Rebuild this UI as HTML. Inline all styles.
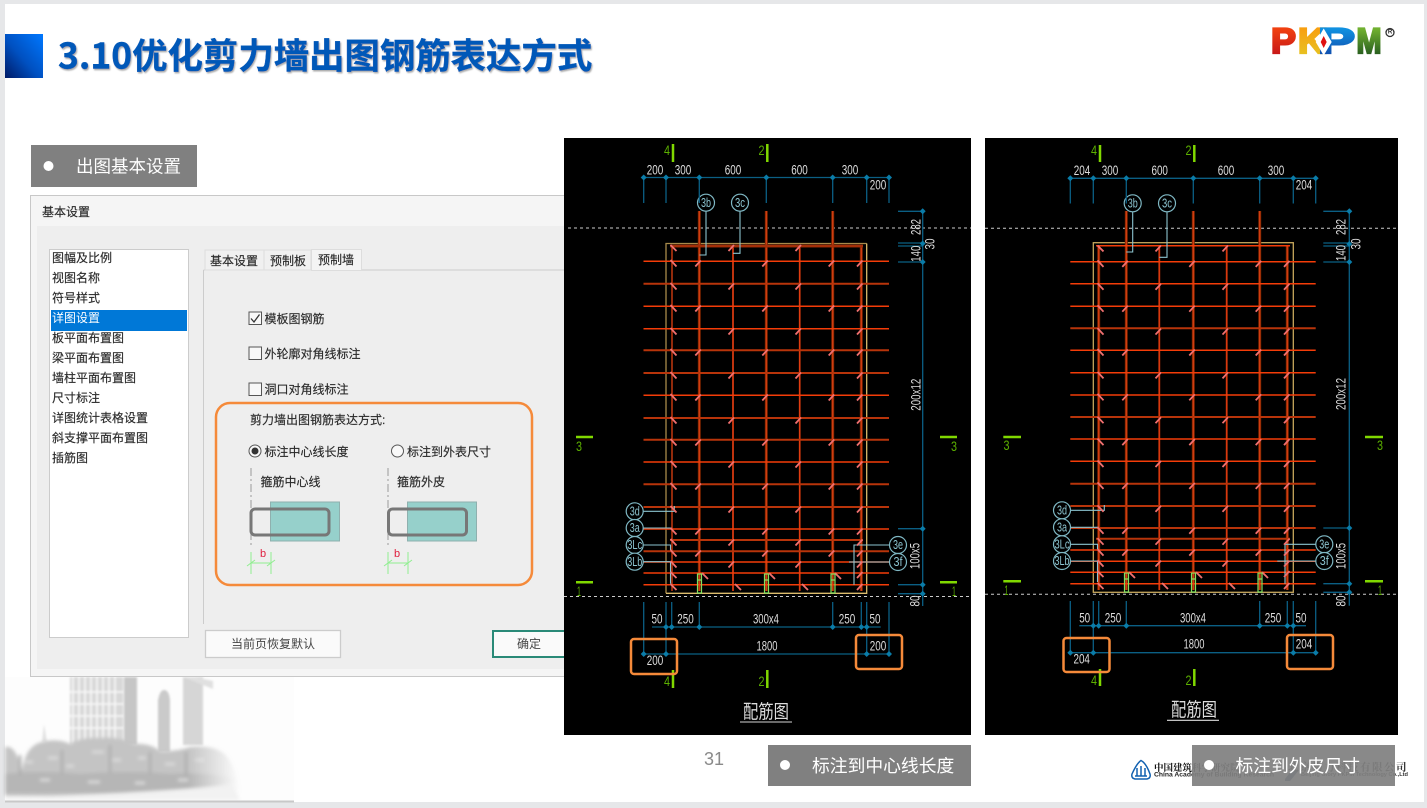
<!DOCTYPE html>
<html><head><meta charset="utf-8"><style>
html,body{margin:0;padding:0;background:#e6e7e9;overflow:hidden}
svg{display:block}
text{dominant-baseline:central;font-family:"Liberation Sans","Noto Sans CJK SC",sans-serif}
.t{font-size:12px;fill:#2a2a2a;stroke:#2a2a2a;stroke-width:.15px}
.c{font-size:13.5px;fill:#ddd;text-anchor:middle}
.o{font-size:12.5px;fill:#8cc4d0;text-anchor:middle}
.g{font-size:14px;fill:#5cb000;text-anchor:middle}
.w{font-size:17.8px;fill:#fff;font-family:"Noto Sans CJK SC",sans-serif}
.ti{font-family:"Noto Sans CJK SC",sans-serif;font-size:19px;fill:#ddd;text-anchor:middle}
.lg{font-size:35px;font-weight:700;font-family:"Liberation Sans",sans-serif}
</style></head><body>
<svg xmlns="http://www.w3.org/2000/svg" width="1427" height="808" viewBox="0 0 1427 808">
<defs>
<linearGradient id="sq" x1="0" y1="1" x2="1" y2="0"><stop offset="0" stop-color="#001a66"/><stop offset=".45" stop-color="#0050c0"/><stop offset="1" stop-color="#0078ff"/></linearGradient>
<linearGradient id="lp" gradientUnits="userSpaceOnUse" x1="0" y1="29" x2="0" y2="54"><stop offset="0" stop-color="#f04010"/><stop offset="1" stop-color="#c81818"/></linearGradient>
<linearGradient id="lk" gradientUnits="userSpaceOnUse" x1="0" y1="29" x2="0" y2="54"><stop offset="0" stop-color="#f8a010"/><stop offset="1" stop-color="#e8c020"/></linearGradient>
<linearGradient id="lb" gradientUnits="userSpaceOnUse" x1="0" y1="29" x2="0" y2="54"><stop offset="0" stop-color="#1090e0"/><stop offset="1" stop-color="#1050b0"/></linearGradient>
<linearGradient id="lm" gradientUnits="userSpaceOnUse" x1="0" y1="29" x2="0" y2="54"><stop offset="0" stop-color="#70b030"/><stop offset="1" stop-color="#2a6020"/></linearGradient>
<linearGradient id="fade" gradientUnits="userSpaceOnUse" x1="5" y1="0" x2="240" y2="0"><stop offset="0" stop-color="#fff"/><stop offset=".78" stop-color="#fff"/><stop offset="1" stop-color="#000"/></linearGradient>
<mask id="fm" maskUnits="userSpaceOnUse" x="0" y="670" width="300" height="138"><rect x="0" y="670" width="300" height="138" fill="url(#fade)"/></mask>
<filter id="bl" x="-5%" y="-5%" width="110%" height="110%"><feGaussianBlur stdDeviation="1"/></filter>
<filter id="bt" x="-5%" y="-10%" width="110%" height="120%"><feGaussianBlur stdDeviation="1.800"/></filter>
<filter id="ts" x="-5%" y="-20%" width="110%" height="140%"><feDropShadow dx="1" dy="1.5" stdDeviation=".8" flood-color="#888" flood-opacity=".7"/></filter>
<path id="d" d="M-3 0L0-3L3 0L0 3Z" fill="#0a7ca8"/>
<path id="A" d="M670.5-1l6 6.5M695.3 5.5l5.5-6M762.3 5.5l5.5-6M828.7 5.5l5.5-6M857 5.5l5.5-6" fill="none" stroke="#f07070" stroke-width="1.8"/>
<path id="B" d="M670.5-1l6 6.5M728.5 5.5l5.5-6M795.5 5.5l5.5-6M857 5.5l5.5-6" fill="none" stroke="#f07070" stroke-width="1.8"/>
<g id="ties">
<use href="#A" y="261"/><use href="#B" y="284"/><use href="#A" y="306"/><use href="#B" y="329"/><use href="#A" y="350"/><use href="#B" y="373"/><use href="#A" y="395"/><use href="#B" y="418"/><use href="#A" y="440"/><use href="#B" y="462"/><use href="#A" y="484"/><use href="#B" y="507"/><use href="#A" y="529"/><use href="#B" y="540"/><use href="#A" y="551"/><use href="#B" y="562"/>
<path d="M670.5 245l6 6M728.5 251l5.5-6M795.5 251l5.5-6M670.5 572l6 6M857 578l5.5-6M702 573l6 6M769 573l6 6M835 573l6 6M670.5 584l6 6M857 590l5.5-6M735 584l6 6M802 584l6 6" fill="none" stroke="#f07070" stroke-width="1.8"/>
<path d="M697.5 574h4v19h-4zM764.5 574h4v19h-4zM831 574h4v19h-4zM697.5 580h4M764.5 580h4M831 580h4" fill="none" stroke="#80e060" stroke-width="1.2"/>
</g>
</defs>

<rect x="5" y="4" width="1419" height="798" fill="#fff"/>

<!-- city image -->
<rect x="5" y="677" width="289" height="125" fill="#fdfdfd"/>
<g filter="url(#bl)">
<path d="M70 677h53v68H70z" fill="#d8d8d8"/>
<path d="M73 677v68M79 677v68M85 677v68M91 677v68M97 677v68M103 677v68M109 677v68M115 677v68M70 692h53M70 704h53M70 716h53M70 728h53" stroke="#fff" stroke-width="1.6" opacity=".85"/>
<path d="M124 677h13v68h-13z" fill="#c6c6c6"/>
<path d="M158 752V700Q160 690 164 690Q169 690 170 700V752z" fill="#cacaca"/>
<path d="M183 677h20v68h-20z" fill="#d6d6d6"/>
<path d="M183 677l30 12v-8l-18-4z" fill="#e0e0e0"/>
<path d="M42 742l2-18 3 18z" fill="#e2e2e2"/>
</g>
<g filter="url(#bt)"><g mask="url(#fm)">
<path d="M5 747Q13 745 18 758L22 770Q26 745 42 742Q58 738 70 744Q82 737 100 738Q118 736 135 744Q150 743 160 751Q175 752 190 747Q210 745 222 752Q236 762 240 796H5z" fill="#c4c4c4"/>
<path d="M5 774Q40 770 80 774Q130 770 170 774Q205 772 236 778V793H5z" fill="#b6b6b6"/>
<path d="M25 762h8M48 758h10M66 766h8M92 752h12M112 760h9M138 758h8M165 764h10M195 760h9M40 780h10M88 782h12M135 783h10M178 780h10" stroke="#d8d8d8" stroke-width="3" fill="none"/>
<path d="M20 755v20M62 750v24M110 745v28M150 752v22M186 752v24" stroke="#adadad" stroke-width="2.5" fill="none"/>
</g>
<path d="M5 797Q120 795 232 785L240 800H5z" fill="#f2f2f2"/>
</g>
<rect x="5" y="800.5" width="289" height="2" fill="#c8c8c8"/>

<!-- title -->
<rect x="5" y="34" width="38" height="44" fill="url(#sq)"/>
<text x="58" y="54" filter="url(#ts)" style="font-family:'Noto Sans CJK SC',sans-serif;font-size:35.4px;font-weight:700;fill:#0558b8;stroke:#0558b8;stroke-width:.4px">3.10优化剪力墙出图钢筋表达方式</text>

<!-- logo -->
<text class="lg" x="1271" y="41.5" textLength="25" lengthAdjust="spacingAndGlyphs" fill="url(#lp)" stroke="url(#lp)" stroke-width="2.2">P</text>
<text class="lg" x="1298" y="41.5" textLength="27" lengthAdjust="spacingAndGlyphs" fill="url(#lk)" stroke="url(#lk)" stroke-width="2.2">K</text>
<text class="lg" x="1318" y="41.5" textLength="37" lengthAdjust="spacingAndGlyphs" fill="url(#lb)" stroke="url(#lb)" stroke-width="2.2">P</text>
<text class="lg" x="1356.5" y="41.5" textLength="25" lengthAdjust="spacingAndGlyphs" fill="url(#lm)" stroke="url(#lm)" stroke-width="2.2">M</text>
<path d="M1323.7 28.5l-8 13.5 8 13.5 8-13.5z" fill="#fff"/>
<path d="M1323.7 36l-3 6 3 6 3-6z" fill="#e01010"/>
<circle cx="1390" cy="32.5" r="4" fill="none" stroke="#333" stroke-width="1.3"/>
<text x="1390" y="32.5" text-anchor="middle" font-size="6" font-weight="700" fill="#222">R</text>

<!-- label 1 -->
<rect x="31" y="145" width="166" height="42" fill="#808080"/>
<circle cx="48.5" cy="166" r="5" fill="#fff"/>
<text x="76" y="166" class="w" style="font-size:17.5px">出图基本设置</text>

<!-- dialog -->
<rect x="30.5" y="195.5" width="540" height="481" fill="#f5f5f5" stroke="#c8c8c8"/>
<rect x="37" y="226" width="530" height="443" fill="#eee"/>
<text x="42" y="212" class="t">基本设置</text>
<rect x="49.5" y="249.5" width="139" height="388" fill="#fff" stroke="#ccc"/>
<rect x="51" y="310" width="136" height="21" fill="#0078d7"/>
<text x="52" y="258" class="t">图幅及比例</text>
<text x="52" y="278" class="t">视图名称</text>
<text x="52" y="298" class="t">符号样式</text>
<text x="52" y="318" class="t" style="fill:#fff;stroke:none">详图设置</text>
<text x="52" y="338" class="t">板平面布置图</text>
<text x="52" y="358" class="t">梁平面布置图</text>
<text x="52" y="378" class="t">墙柱平面布置图</text>
<text x="52" y="398" class="t">尺寸标注</text>
<text x="52" y="418" class="t">详图统计表格设置</text>
<text x="52" y="438" class="t">斜支撑平面布置图</text>
<text x="52" y="458" class="t">插筋图</text>
<!-- tabs -->
<path d="M203.5 270H564M203.5 270V624" stroke="#ccc" fill="none"/>
<rect x="205" y="250" width="59" height="20" fill="#f0f0f0" stroke="#ddd"/>
<rect x="264" y="250" width="47" height="20" fill="#f0f0f0" stroke="#ddd"/>
<rect x="311.5" y="249.5" width="50" height="21" fill="#f4f4f4" stroke="#ddd"/>
<text x="210" y="261" class="t">基本设置</text>
<text x="270" y="261" class="t">预制板</text>
<text x="318" y="260" class="t">预制墙</text>
<!-- checks -->
<rect x="249" y="312" width="12.5" height="12.5" fill="#f8f8f8" stroke="#555"/>
<path d="M251 318.5l3 3.5 5.5-7.5" fill="none" stroke="#333" stroke-width="1.3"/>
<text x="264.5" y="319" class="t">模板图钢筋</text>
<rect x="249" y="347" width="12.5" height="12.5" fill="#f8f8f8" stroke="#555"/>
<text x="264.5" y="354" class="t">外轮廓对角线标注</text>
<rect x="249" y="383" width="12.5" height="12.5" fill="#f8f8f8" stroke="#555"/>
<text x="264.5" y="389.5" class="t">洞口对角线标注</text>
<rect x="216" y="403" width="316" height="182" rx="14" fill="none" stroke="#f58a3a" stroke-width="2.5"/>
<text x="250" y="420" class="t">剪力墙出图钢筋表达方式:</text>
<circle cx="255" cy="451" r="6" fill="#f8f8f8" stroke="#555"/><circle cx="255" cy="451" r="3.5" fill="#333"/>
<text x="264.5" y="452" class="t">标注中心线长度</text>
<circle cx="397.5" cy="451" r="6" fill="#f8f8f8" stroke="#555"/>
<text x="407" y="452" class="t">标注到外表尺寸</text>
<text x="260.5" y="482" class="t">箍筋中心线</text>
<text x="397" y="482" class="t">箍筋外皮</text>
<path d="M251 468V548M388 468V548" stroke="#999" stroke-dasharray="8 3 2 3" fill="none"/>
<rect x="270.5" y="502" width="69" height="39" fill="#96d0cb" stroke="#8fb0ae"/>
<rect x="407.5" y="502" width="69" height="39" fill="#96d0cb" stroke="#8fb0ae"/>
<rect x="251" y="509" width="78" height="26" rx="4" fill="none" stroke="#777" stroke-width="3"/>
<rect x="388.5" y="509" width="78" height="26" rx="4" fill="none" stroke="#777" stroke-width="3"/>
<text x="263" y="554" text-anchor="middle" font-size="11" fill="#e02040">b</text>
<text x="397" y="554" text-anchor="middle" font-size="11" fill="#e02040">b</text>
<path d="M251 552V574M271 552V574M247 566l8-6M267 566l8-6M251 563H271M388 552V574M408 552V574M384 566l8-6M404 566l8-6M388 563H408" stroke="#90ee90" fill="none"/>
<rect x="205.5" y="630.5" width="135" height="27" fill="#fafafa" stroke="#ccc" stroke-width="1.3"/>
<text x="273" y="644" text-anchor="middle" class="t" style="fill:#444;stroke:none">当前页恢复默认</text>
<rect x="493" y="631" width="80" height="26" fill="#fafafa" stroke="#2a8a78" stroke-width="2"/>
<text x="529" y="644" text-anchor="middle" class="t" style="fill:#444;stroke:none">确定</text>

<!-- LEFT DRAWING -->
<rect x="564" y="138" width="407" height="597" fill="#000"/>
<path d="M568 228H971M564 596.5H971" stroke="#ccc" stroke-dasharray="3 3"/>
<path d="M666 593.3V243.5H866.7" fill="none" stroke="#a88a4a" stroke-width="1.3"/>
<path d="M666 593.3H866.7V243.5" fill="none" stroke="#dcbc6c" stroke-width="1.3"/>
<g fill="none">
<path d="M699.3 211V591M766.3 211V591M832.7 211V591M861.3 245V591" stroke="#7a2400" stroke-width="3"/>
<path d="M699.3 211V591M766.3 211V591M832.7 211V591M861.3 245V591M672 245V591" stroke="#d03c10" stroke-width="1.4"/>
<path d="M733 245V591M799.7 245V591" stroke="#e03c10" stroke-width="1.7"/>
<path d="M670 246H863" stroke="#8a2a08" stroke-width="3"/>
<path d="M670 246H863" stroke="#c03408" stroke-width="1"/>
<path d="M643.5 261.3H889M643.5 306.3H889M643.5 328.7H889M643.5 395.3H889M643.5 462H889M643.5 529H889M643.5 562H889M643.5 573H889M643.5 584.7H889" stroke="#f43c08" stroke-width="1.5"/>
<path d="M643.5 283.7H889M643.5 350.3H889M643.5 373H889M643.5 418H889M643.5 439.7H889M643.5 484.3H889M643.5 507H889M670 540H863M643.5 551.3H889" stroke="#b8340a" stroke-width="2"/>
<path d="M706 211V255H699.5M740 211V253.3H733M643 511.3H674.3V506M643 528H671.7M643 545H670.5V550M643 561.7H670.5V583.7M889.5 545H854V584.7M889.5 562H849" stroke="#8cc4d0" stroke-width="1.1"/>
</g>
<use href="#ties"/>
<g fill="#000" stroke="#7fb8c4" stroke-width="1.2">
<circle cx="706" cy="202.7" r="8.5"/><circle cx="740" cy="202.7" r="8.5"/><circle cx="634.7" cy="511.3" r="8.5"/><circle cx="634.7" cy="528" r="8.5"/><circle cx="634.7" cy="545" r="8.5"/><circle cx="634.7" cy="561.7" r="8.5"/><circle cx="898" cy="545" r="8.5"/><circle cx="898" cy="562" r="8.5"/>
</g>
<text x="706" y="203" class="o" textLength="10" lengthAdjust="spacingAndGlyphs">3b</text><text x="740" y="203" class="o" textLength="10" lengthAdjust="spacingAndGlyphs">3c</text><text x="634.7" y="511.5" class="o" textLength="10" lengthAdjust="spacingAndGlyphs">3d</text><text x="634.7" y="528" class="o" textLength="10" lengthAdjust="spacingAndGlyphs">3a</text><text x="634.7" y="545" class="o" textLength="15" lengthAdjust="spacingAndGlyphs">3Lc</text><text x="634.7" y="562" class="o" textLength="15" lengthAdjust="spacingAndGlyphs">3Lb</text><text x="898" y="545" class="o" textLength="10" lengthAdjust="spacingAndGlyphs">3e</text><text x="898" y="562" class="o" textLength="9" lengthAdjust="spacingAndGlyphs">3f</text>
<g fill="none" stroke="#0b5f84" stroke-width="1.3">
<path d="M643.7 177.5H889M643.7 177.5V203M666 177.5V203M699.3 177.5V203M766.3 177.5V203M832.7 177.5V203M866.7 177.5V203M889 177.5V203"/>
<path d="M922.7 211V606M898 211.3H922.7M898 243H922.7M898 246H922.7M898 262H922.7M898 528.7H922.7M898 584.7H922.7M898 593.7H922.7"/>
<path d="M652 627H880.7M643.7 602V654M666 602V654M671.7 602V627M699.3 602V627M832.7 602V627M861.3 602V627M866.7 602V654M889 602V654M643.7 654H889"/>
</g>
<use href="#d" x="643.7" y="177.5"/><use href="#d" x="666" y="177.5"/><use href="#d" x="699.3" y="177.5"/><use href="#d" x="766.3" y="177.5"/><use href="#d" x="832.7" y="177.5"/><use href="#d" x="866.7" y="177.5"/><use href="#d" x="889" y="177.5"/>
<use href="#d" x="922.7" y="211.3"/><use href="#d" x="922.7" y="243.5"/><use href="#d" x="922.7" y="262"/><use href="#d" x="922.7" y="528.7"/><use href="#d" x="922.7" y="584.7"/><use href="#d" x="922.7" y="593.7"/>
<use href="#d" x="666" y="627"/><use href="#d" x="671.7" y="627"/><use href="#d" x="699.3" y="627"/><use href="#d" x="832.7" y="627"/><use href="#d" x="861.3" y="627"/><use href="#d" x="866.7" y="627"/>
<use href="#d" x="643.7" y="654"/><use href="#d" x="666" y="654"/><use href="#d" x="866.7" y="654"/><use href="#d" x="889" y="654"/>
<text x="655" y="170" class="c" textLength="16.5" lengthAdjust="spacingAndGlyphs">200</text><text x="683" y="170" class="c" textLength="16.5" lengthAdjust="spacingAndGlyphs">300</text><text x="733" y="170" class="c" textLength="16.5" lengthAdjust="spacingAndGlyphs">600</text><text x="799.5" y="170" class="c" textLength="16.5" lengthAdjust="spacingAndGlyphs">600</text><text x="850" y="170" class="c" textLength="16.5" lengthAdjust="spacingAndGlyphs">300</text><text x="878" y="185" class="c" textLength="16.5" lengthAdjust="spacingAndGlyphs">200</text>
<text class="c" transform="translate(916 227) rotate(-90)" textLength="16" lengthAdjust="spacingAndGlyphs">282</text><text class="c" transform="translate(930 244) rotate(-90)" textLength="11" lengthAdjust="spacingAndGlyphs">30</text><text class="c" transform="translate(916 253.7) rotate(-90)" textLength="16" lengthAdjust="spacingAndGlyphs">140</text><text class="c" transform="translate(916 394.7) rotate(-90)" textLength="32" lengthAdjust="spacingAndGlyphs">200x12</text><text class="c" transform="translate(915 556) rotate(-90)" textLength="26" lengthAdjust="spacingAndGlyphs">100x5</text><text class="c" transform="translate(915 601) rotate(-90)" textLength="11" lengthAdjust="spacingAndGlyphs">80</text>
<text x="657" y="619" class="c" textLength="11" lengthAdjust="spacingAndGlyphs">50</text><text x="685.5" y="619" class="c" textLength="16.5" lengthAdjust="spacingAndGlyphs">250</text><text x="766" y="619" class="c" textLength="26" lengthAdjust="spacingAndGlyphs">300x4</text><text x="847" y="619" class="c" textLength="16.5" lengthAdjust="spacingAndGlyphs">250</text><text x="875" y="619" class="c" textLength="11" lengthAdjust="spacingAndGlyphs">50</text><text x="767" y="646" class="c" textLength="21" lengthAdjust="spacingAndGlyphs">1800</text><text x="655" y="660.5" class="c" textLength="16.5" lengthAdjust="spacingAndGlyphs">200</text><text x="878" y="646" class="c" textLength="16.5" lengthAdjust="spacingAndGlyphs">200</text>
<path d="M673 144V162M767.3 144V162M673 670V688M767.3 670V688" stroke="#80d800" stroke-width="2.5"/>
<path d="M576 437H593M940 437H957M576 582.3H593M940 582.3H957" stroke="#80d800" stroke-width="2.5"/>
<text x="667" y="150" class="g" textLength="6" lengthAdjust="spacingAndGlyphs">4</text><text x="761.5" y="150" class="g" textLength="6" lengthAdjust="spacingAndGlyphs">2</text><text x="667" y="681" class="g" textLength="6" lengthAdjust="spacingAndGlyphs">4</text><text x="761.5" y="681" class="g" textLength="6" lengthAdjust="spacingAndGlyphs">2</text>
<text x="579" y="446" class="g" textLength="6" lengthAdjust="spacingAndGlyphs">3</text><text x="954" y="446" class="g" textLength="6" lengthAdjust="spacingAndGlyphs">3</text><text x="579" y="591" class="g" textLength="4" lengthAdjust="spacingAndGlyphs">1</text><text x="954" y="591" class="g" textLength="4" lengthAdjust="spacingAndGlyphs">1</text>
<rect x="631" y="639" width="46" height="35" rx="3" fill="none" stroke="#f58a3a" stroke-width="2.5"/>
<rect x="856" y="635" width="46" height="34" rx="3" fill="none" stroke="#f58a3a" stroke-width="2.5"/>
<text x="766" y="710.5" class="ti" textLength="46" lengthAdjust="spacingAndGlyphs">配筋图</text>
<path d="M740 722H792" stroke="#aaa" stroke-width="1.2"/>

<!-- RIGHT DRAWING -->
<rect x="985" y="138" width="413" height="597" fill="#000"/>
<path d="M985 228.3H1398M985 594.3H1398" stroke="#ccc" stroke-dasharray="3 3"/>
<rect x="1093.3" y="242.7" width="200" height="349.6" fill="none" stroke="#c8a85c" stroke-width="1.3"/>
<g fill="none">
<path d="M1126.3 211V590M1193.3 211V590M1259.7 211V590M1287.3 245V590M1098.7 245V590" stroke="#7a2400" stroke-width="3"/>
<path d="M1098.7 245V590M1126.3 211V590M1193.3 211V590M1259.7 211V590M1287.3 245V590" stroke="#d03c10" stroke-width="1.4"/>
<path d="M1159.3 245V590M1226.7 245V590" stroke="#d8380e" stroke-width="1.8"/>
<path d="M1096 245.7H1290M1070.3 261.7H1315.7M1070.3 283.7H1315.7M1070.3 306.3H1315.7M1070.3 350.3H1315.7M1070.3 372.7H1315.7M1070.3 395H1315.7M1070.3 439H1315.7M1070.3 461.3H1315.7M1070.3 550H1315.7M1070.3 561.3H1315.7M1070.3 572.3H1315.7M1070.3 583.7H1315.7" stroke="#f43c08" stroke-width="1.5"/>
<path d="M1070.3 328.3H1315.7M1070.3 417H1315.7M1070.3 483.7H1315.7M1070.3 506H1315.7M1070.3 528H1315.7M1096 538.7H1290" stroke="#b8340a" stroke-width="2"/>
<path d="M1132.7 211V252H1126.3M1167 211V257.3H1159.3M1070 510.3H1104.3V505M1070 527.3H1098.7M1070 544.3H1097.5V549M1070 561H1097.5V582M1316 544.3H1285V583.7M1316 561H1277.3" stroke="#8cc4d0" stroke-width="1.1"/>
</g>
<use href="#ties" transform="matrix(1 0 0 .9957 427 1.52)"/>
<g fill="#000" stroke="#7fb8c4" stroke-width="1.2">
<circle cx="1132.7" cy="203.3" r="8.5"/><circle cx="1167" cy="203.3" r="8.5"/><circle cx="1062" cy="510.3" r="8.5"/><circle cx="1062" cy="527.3" r="8.5"/><circle cx="1062" cy="544.3" r="8.5"/><circle cx="1062" cy="561" r="8.5"/><circle cx="1324.3" cy="544.3" r="8.5"/><circle cx="1324.3" cy="561" r="8.5"/>
</g>
<text x="1132.7" y="203.5" class="o" textLength="10" lengthAdjust="spacingAndGlyphs">3b</text><text x="1167" y="203.5" class="o" textLength="10" lengthAdjust="spacingAndGlyphs">3c</text><text x="1062" y="510.5" class="o" textLength="10" lengthAdjust="spacingAndGlyphs">3d</text><text x="1062" y="527.5" class="o" textLength="10" lengthAdjust="spacingAndGlyphs">3a</text><text x="1062" y="544.5" class="o" textLength="15" lengthAdjust="spacingAndGlyphs">3Lc</text><text x="1062" y="561" class="o" textLength="15" lengthAdjust="spacingAndGlyphs">3Lb</text><text x="1324.3" y="544.5" class="o" textLength="10" lengthAdjust="spacingAndGlyphs">3e</text><text x="1324.3" y="561" class="o" textLength="9" lengthAdjust="spacingAndGlyphs">3f</text>
<g fill="none" stroke="#0b5f84" stroke-width="1.3">
<path d="M1070.3 178.3H1315.7M1070.3 178.3V203.5M1093.3 178.3V203.5M1126.3 178.3V203.5M1193.3 178.3V203.5M1259.7 178.3V203.5M1293.3 178.3V203.5M1315.7 178.3V203.5"/>
<path d="M1349.3 211V605.7M1323.3 211.3H1349.3M1323.3 243H1349.3M1323.3 246H1349.3M1323.3 262H1349.3M1323.3 528H1349.3M1323.3 583.7H1349.3M1323.3 592.3H1349.3"/>
<path d="M1079.3 625.7H1306M1070.3 601V652.7M1093.3 601V652.7M1098.7 601V625.7M1126.3 601V625.7M1259.7 601V625.7M1287.3 601V625.7M1293.3 601V652.7M1315.7 601V652.7M1070.3 652.7H1315.7"/>
</g>
<use href="#d" x="1070.3" y="178.3"/><use href="#d" x="1093.3" y="178.3"/><use href="#d" x="1126.3" y="178.3"/><use href="#d" x="1193.3" y="178.3"/><use href="#d" x="1259.7" y="178.3"/><use href="#d" x="1293.3" y="178.3"/><use href="#d" x="1315.7" y="178.3"/>
<use href="#d" x="1349.3" y="211.3"/><use href="#d" x="1349.3" y="244"/><use href="#d" x="1349.3" y="262"/><use href="#d" x="1349.3" y="528"/><use href="#d" x="1349.3" y="583.7"/><use href="#d" x="1349.3" y="592.3"/>
<use href="#d" x="1093.3" y="625.7"/><use href="#d" x="1098.7" y="625.7"/><use href="#d" x="1126.3" y="625.7"/><use href="#d" x="1259.7" y="625.7"/><use href="#d" x="1287.3" y="625.7"/><use href="#d" x="1293.3" y="625.7"/>
<use href="#d" x="1070.3" y="652.7"/><use href="#d" x="1093.3" y="652.7"/><use href="#d" x="1293.3" y="652.7"/><use href="#d" x="1315.7" y="652.7"/>
<text x="1082" y="170.5" class="c" textLength="16.5" lengthAdjust="spacingAndGlyphs">204</text><text x="1110" y="170.5" class="c" textLength="16.5" lengthAdjust="spacingAndGlyphs">300</text><text x="1159.7" y="170.5" class="c" textLength="16.5" lengthAdjust="spacingAndGlyphs">600</text><text x="1226" y="170.5" class="c" textLength="16.5" lengthAdjust="spacingAndGlyphs">600</text><text x="1276" y="170.5" class="c" textLength="16.5" lengthAdjust="spacingAndGlyphs">300</text><text x="1304" y="185" class="c" textLength="16.5" lengthAdjust="spacingAndGlyphs">204</text>
<text class="c" transform="translate(1341 227) rotate(-90)" textLength="16" lengthAdjust="spacingAndGlyphs">282</text><text class="c" transform="translate(1356 244) rotate(-90)" textLength="11" lengthAdjust="spacingAndGlyphs">30</text><text class="c" transform="translate(1341 253) rotate(-90)" textLength="16" lengthAdjust="spacingAndGlyphs">140</text><text class="c" transform="translate(1341 394) rotate(-90)" textLength="32" lengthAdjust="spacingAndGlyphs">200x12</text><text class="c" transform="translate(1341 556) rotate(-90)" textLength="26" lengthAdjust="spacingAndGlyphs">100x5</text><text class="c" transform="translate(1341 601) rotate(-90)" textLength="11" lengthAdjust="spacingAndGlyphs">80</text>
<text x="1084.7" y="618" class="c" textLength="11" lengthAdjust="spacingAndGlyphs">50</text><text x="1113" y="618" class="c" textLength="16.5" lengthAdjust="spacingAndGlyphs">250</text><text x="1193" y="618" class="c" textLength="26" lengthAdjust="spacingAndGlyphs">300x4</text><text x="1273" y="618" class="c" textLength="16.5" lengthAdjust="spacingAndGlyphs">250</text><text x="1301" y="618" class="c" textLength="11" lengthAdjust="spacingAndGlyphs">50</text><text x="1194" y="644" class="c" textLength="21" lengthAdjust="spacingAndGlyphs">1800</text><text x="1081.7" y="659" class="c" textLength="16.5" lengthAdjust="spacingAndGlyphs">204</text><text x="1304" y="644" class="c" textLength="16.5" lengthAdjust="spacingAndGlyphs">204</text>
<path d="M1100 145V162M1194.3 145V162M1100 669V686M1194.3 669V686" stroke="#80d800" stroke-width="2.5"/>
<path d="M1003.3 437H1021M1365 437H1383M1003.3 581.3H1021M1365 581.3H1383" stroke="#80d800" stroke-width="2.5"/>
<text x="1094" y="150" class="g" textLength="6" lengthAdjust="spacingAndGlyphs">4</text><text x="1188.5" y="150" class="g" textLength="6" lengthAdjust="spacingAndGlyphs">2</text><text x="1094" y="680" class="g" textLength="6" lengthAdjust="spacingAndGlyphs">4</text><text x="1188.5" y="680" class="g" textLength="6" lengthAdjust="spacingAndGlyphs">2</text>
<text x="1006.5" y="445" class="g" textLength="6" lengthAdjust="spacingAndGlyphs">3</text><text x="1380" y="445" class="g" textLength="6" lengthAdjust="spacingAndGlyphs">3</text><text x="1006.5" y="590" class="g" textLength="4" lengthAdjust="spacingAndGlyphs">1</text><text x="1380" y="590" class="g" textLength="4" lengthAdjust="spacingAndGlyphs">1</text>
<rect x="1063.5" y="638" width="46" height="34" rx="3" fill="none" stroke="#f58a3a" stroke-width="2.5"/>
<rect x="1287" y="635" width="46" height="34" rx="3" fill="none" stroke="#f58a3a" stroke-width="2.5"/>
<text x="1194" y="708.5" class="ti" textLength="46" lengthAdjust="spacingAndGlyphs">配筋图</text>
<path d="M1167 720.3H1219" stroke="#ddd" stroke-width="1.2"/>

<!-- footer -->
<text x="704" y="759" style="font-size:18px;fill:#8a8a8a">31</text>
<path d="M1141 760.5Q1137 763 1132 774Q1131 778 1135 779H1147Q1151 778 1150 774Q1146 763 1141 760.5Z" fill="#fff" stroke="#1060b0" stroke-width="1.5"/>
<path d="M1137 768V776M1141 766V776M1145 768V776M1135 776H1147" stroke="#1060b0" stroke-width="1.5" fill="none"/>
<text x="1154" y="767" style="font-family:'Noto Serif CJK SC',serif;font-size:9.5px;font-weight:700;fill:#111">中国建筑科学研究院</text>
<text x="1154" y="775" style="font-size:6.5px;font-weight:700;fill:#222" textLength="120" lengthAdjust="spacingAndGlyphs">China Academy of Building Research</text>
<path d="M1285 779l7-9h7l-9 11h-5z" fill="#3a5a80"/>
<text x="1288" y="767" style="font-family:'Noto Serif CJK SC',serif;font-size:10.5px;font-weight:700;fill:#333;letter-spacing:1.5px">北京构力科技有限公司</text>
<text x="1301" y="775" style="font-size:5.5px;font-weight:700;fill:#333" textLength="107" lengthAdjust="spacingAndGlyphs">Beijing Glory PKPM Technology Co.,Ltd</text>
<rect x="768" y="745" width="203" height="41" fill="#808080"/>
<circle cx="785" cy="765" r="5" fill="#fff"/>
<text x="812" y="765" class="w">标注到中心线长度</text>
<rect x="1192" y="745" width="203" height="41" fill="#808080" fill-opacity=".93"/>
<circle cx="1209" cy="765" r="5" fill="#fff"/>
<text x="1235.5" y="765" class="w">标注到外皮尺寸</text>
</svg>
</body></html>
